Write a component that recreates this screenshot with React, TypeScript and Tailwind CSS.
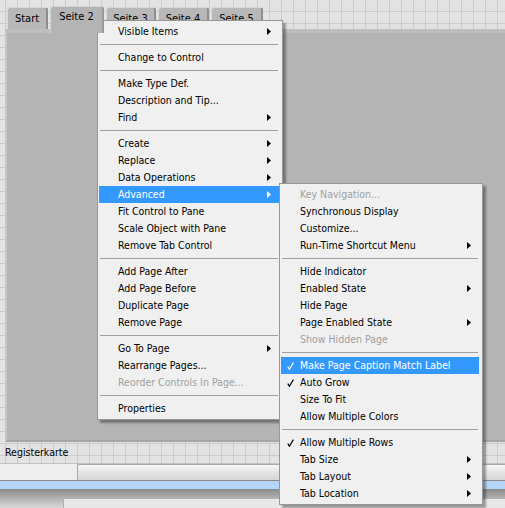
import React from 'react';

type Item =
  | { label: string; arrow?: boolean; disabled?: boolean; checked?: boolean; active?: boolean }
  | 'sep';

const mainMenu: Item[] = [
  { label: 'Visible Items', arrow: true },
  'sep',
  { label: 'Change to Control' },
  'sep',
  { label: 'Make Type Def.' },
  { label: 'Description and Tip...' },
  { label: 'Find', arrow: true },
  'sep',
  { label: 'Create', arrow: true },
  { label: 'Replace', arrow: true },
  { label: 'Data Operations', arrow: true },
  { label: 'Advanced', arrow: true, active: true },
  { label: 'Fit Control to Pane' },
  { label: 'Scale Object with Pane' },
  { label: 'Remove Tab Control' },
  'sep',
  { label: 'Add Page After' },
  { label: 'Add Page Before' },
  { label: 'Duplicate Page' },
  { label: 'Remove Page' },
  'sep',
  { label: 'Go To Page', arrow: true },
  { label: 'Rearrange Pages...' },
  { label: 'Reorder Controls In Page...', disabled: true },
  'sep',
  { label: 'Properties' },
];

const advancedMenu: Item[] = [
  { label: 'Key Navigation...', disabled: true },
  { label: 'Synchronous Display' },
  { label: 'Customize...' },
  { label: 'Run-Time Shortcut Menu', arrow: true },
  'sep',
  { label: 'Hide Indicator' },
  { label: 'Enabled State', arrow: true },
  { label: 'Hide Page' },
  { label: 'Page Enabled State', arrow: true },
  { label: 'Show Hidden Page', disabled: true },
  'sep',
  { label: 'Make Page Caption Match Label', checked: true, active: true },
  { label: 'Auto Grow', checked: true },
  { label: 'Size To Fit' },
  { label: 'Allow Multiple Colors' },
  'sep',
  { label: 'Allow Multiple Rows', checked: true },
  { label: 'Tab Size', arrow: true },
  { label: 'Tab Layout', arrow: true },
  { label: 'Tab Location', arrow: true },
];

function Arrow({ white }: { white?: boolean }) {
  return (
    <svg width="4" height="7" viewBox="0 0 4 7" className="shrink-0">
      <polygon points="0,0 4,3.5 0,7" fill={white ? '#ffffff' : '#000000'} />
    </svg>
  );
}

function Check({ white }: { white?: boolean }) {
  return (
    <svg width="7" height="8" viewBox="0 0 7 8">
      <path d="M0.8 4.6 L2.4 7.2 L6.4 0.6" fill="none" stroke={white ? '#ffffff' : '#000000'} strokeWidth="1.2" />
    </svg>
  );
}

function Menu({ items, className }: { items: Item[]; className: string }) {
  return (
    <div
      className={`absolute bg-[#f0f0f0] border border-[#979797] pt-[2px] pb-[2px] pl-[1px] pr-[3px] shadow-[3px_3px_2px_rgba(0,0,0,0.35)] ${className}`}
    >
      {items.map((item, i) => {
        if (item === 'sep') {
          return (
            <div key={i} className="h-[9px] flex items-center px-[1px]">
              <div className="h-px w-full bg-[#a0a0a0]" />
            </div>
          );
        }
        const color = item.active
          ? 'bg-[#3399ff] text-white'
          : item.disabled
          ? 'text-[#a0a0a0]'
          : 'text-black';
        return (
          <div key={i} className={`h-[17px] flex items-center pr-[8px] ${color}`}>
            <span className="w-[19px] pl-[6px] flex items-center">
              {item.checked && <Check white={item.active} />}
            </span>
            <span className="flex-1 whitespace-nowrap">{item.label}</span>
            {item.arrow && <Arrow white={item.active} />}
          </div>
        );
      })}
    </div>
  );
}

function Tab({ label, w, active }: { label: string; w: string; active?: boolean }) {
  if (active) {
    return (
      <div
        className={`${w} h-[27px] -mb-[4px] relative z-10 bg-[#b4b4b4] border-t border-l border-[#d2d2d2] border-r-2 border-r-[#9a9a9a] rounded-t-[3px] flex justify-center pt-[4px] text-[11px]`}
      >
        {label}
      </div>
    );
  }
  return (
    <div
      className={`${w} h-[22px] bg-[#b8b8b8] border-t border-l border-[#d6d6d6] border-r-2 border-r-[#8e8e8e] rounded-t-[3px] flex justify-center pt-[5px] text-[11px]`}
    >
      {label}
    </div>
  );
}

export default function App() {
  return (
    <div className="relative w-[505px] h-[508px] overflow-hidden bg-[#e3e3e3] bg-[linear-gradient(to_right,#cbcbcb_1px,transparent_1px),linear-gradient(to_bottom,#cbcbcb_1px,transparent_1px)] bg-[length:12px_12px] bg-[position:5px_11px] font-['DejaVu_Sans_Condensed','Liberation_Sans',sans-serif] text-[10.5px] leading-none text-black">
      {/* Tab control */}
      <div className="pt-[6px] pl-[5px]">
        <div className="h-[23px] flex items-end gap-[2px] pl-[2px]">
          <Tab label="Start" w="w-[41px]" />
          <Tab label="Seite 2" w="w-[54px]" active />
          <Tab label="Seite 3" w="w-[50px]" />
          <Tab label="Seite 4" w="w-[51px]" />
          <Tab label="Seite 5" w="w-[52px]" />
        </div>
        <div className="h-[413px] bg-[#b4b4b4] border-t-4 border-t-[#bebebe] border-l-2 border-l-[#c6c6c6] border-b-2 border-b-[#a6a6a6]" />
      </div>

      {/* Label */}
      <div className="h-[21px] flex items-center pl-[5px]">Registerkarte</div>

      {/* Bottom bars */}
      <div className="h-[17px] flex border-t border-[#c4c4c4]">
        <div className="w-[77px] bg-[#eeeeee]" />
        <div className="flex-1 border-t border-l border-[#a9a9a9] rounded-tl-[2px] bg-gradient-to-b from-[#f5f5f5] to-[#d6d6d6]" />
      </div>
      <div className="h-px bg-[#8a8a8a]" />
      <div className="h-[8px] bg-[#b5d5f7]" />
      <div className="h-[19px] bg-gradient-to-b from-[#8c8c8c] to-[#dadada] pt-[9px]">
        <div className="ml-[63px] h-full bg-[#e8e8e8] border-t border-l border-[#b3b3b3]" />
      </div>

      <Menu items={mainMenu} className="left-[97px] top-[20px] w-[186px]" />
      <Menu items={advancedMenu} className="left-[279px] top-[183px] w-[204px]" />
    </div>
  );
}
